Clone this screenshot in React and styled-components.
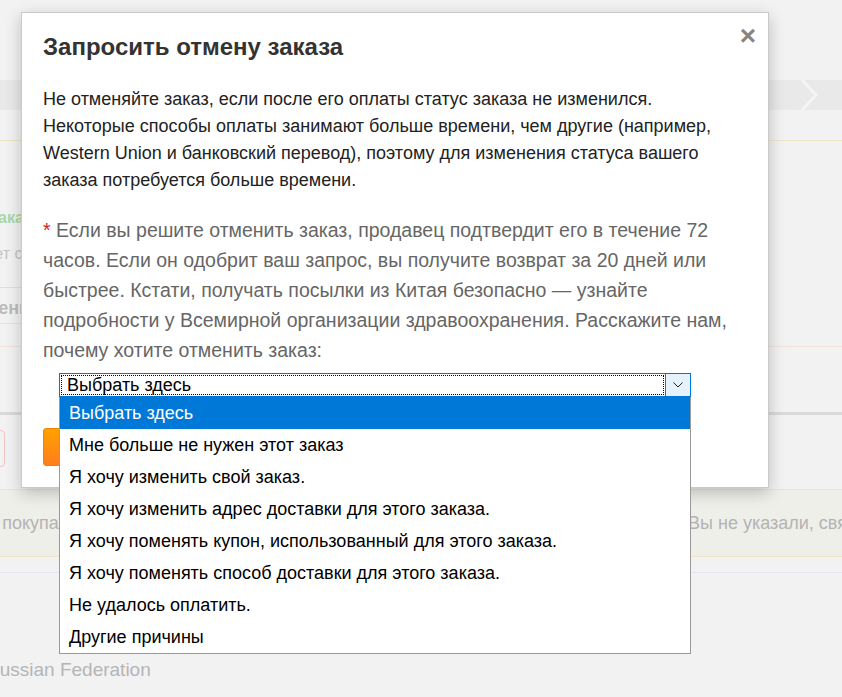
import React from 'react';
import { styled, createGlobalStyle } from 'styled-components';

const GlobalStyle = createGlobalStyle`
  html, body {
    margin: 0;
    padding: 0;
  }
  body {
    font-family: "Liberation Sans", Arial, sans-serif;
    background: #f2f2f2;
  }
`;

// faded order page behind the dialog
const Page = styled.div`
  position: relative;
  width: 842px;
  height: 697px;
  overflow: hidden;
  background: #f2f2f2;
  color: #b8b8b8;
`;

const StepBar = styled.div`
  margin-top: 80px;
  height: 30px;
  background: #e9e9e9;
  display: flex;
  justify-content: flex-end;
  padding-right: 20px;
`;

const Rule = styled.div`
  margin-top: ${p => p.$gap}px;
  height: ${p => p.$size || 1}px;
  width: ${p => p.$width || '100%'};
  background: ${p => p.$color};
`;

const Faded = styled.div`
  margin-top: ${p => p.$gap}px;
  margin-left: ${p => p.$shift}px;
  font-size: ${p => p.$size || 16}px;
  font-weight: ${p => (p.$bold ? 700 : 400)};
  line-height: 20px;
  color: ${p => p.$color || '#bdbdbd'};
  white-space: nowrap;
`;

const GhostButton = styled.div`
  margin-top: 15px;
  margin-left: -60px;
  width: 65px;
  height: 37px;
  box-sizing: border-box;
  border: 1px solid #f2c4c4;
  border-radius: 4px;
`;

const Notice = styled.div`
  margin-top: 22px;
  height: 68px;
  box-sizing: border-box;
  border-top: 1px solid #f1e4c6;
  border-bottom: 1px solid #f1e4c6;
  background: #efefea;
  display: grid;
  grid-template-columns: 688px 1fr;
  align-items: center;
  font-size: 18px;
  color: #b3b3b3;
  white-space: nowrap;
  overflow: hidden;
`;

const NoticeText = styled.span`
  margin-left: ${p => p.$shift || 0}px;
`;

// dialog
const Modal = styled.div`
  position: absolute;
  left: 21px;
  top: 12px;
  width: 748px;
  height: 476px;
  box-sizing: border-box;
  background: #fff;
  border: 1px solid #c9c9c9;
  box-shadow: 0 5px 15px rgba(0, 0, 0, 0.22);
  padding: 20px 22px 0 21px;
`;

const Close = styled.button`
  position: absolute;
  top: 9px;
  right: 12px;
  border: 0;
  background: none;
  padding: 0;
  font: 700 28px/1 "Liberation Sans", Arial, sans-serif;
  color: #858585;
  cursor: pointer;
`;

const Title = styled.h3`
  margin: 0;
  font-size: 24px;
  line-height: 28px;
  font-weight: 700;
  color: #333;
`;

const Lead = styled.p`
  margin: 25px 0 0;
  font-size: 18px;
  line-height: 27px;
  color: #222;
  white-space: nowrap;
`;

const Note = styled.p`
  margin: 21px 0 0;
  font-size: 19.5px;
  line-height: 30px;
  color: #666;
  white-space: nowrap;
`;

const Star = styled.span`
  color: #e02020;
`;

const SelectWrap = styled.div`
  position: relative;
  margin: 8px 0 0 16px;
  width: 632px;
`;

const SelectBox = styled.div`
  display: flex;
  height: 24px;
  box-sizing: border-box;
  border: 1px solid #0078d7;
  background: #fff;
`;

const SelectValue = styled.div`
  flex: 1;
  margin: 1px;
  padding-left: 5px;
  border: 1px dotted #000;
  font-size: 18px;
  line-height: 18px;
  color: #000;
`;

const SelectArrow = styled.div`
  width: 24px;
  background: #e5f1fb;
  border-left: 1px solid #0078d7;
  display: flex;
  align-items: center;
  justify-content: center;
`;

const OptionList = styled.ul`
  position: absolute;
  left: 0;
  top: 24px;
  width: 632px;
  box-sizing: border-box;
  margin: 0;
  padding: 0;
  list-style: none;
  background: #fff;
  border: 1px solid #9a9a9a;
  border-top: 0;
  z-index: 2;
`;

const Option = styled.li`
  height: 32px;
  line-height: 32px;
  padding-left: 9px;
  font-size: 18px;
  color: ${p => (p.$active ? '#fff' : '#000')};
  background: ${p => (p.$active ? '#0078d7' : '#fff')};
`;

const SubmitButton = styled.button`
  margin-top: 31px;
  height: 38px;
  padding: 0 28px;
  border: 1px solid #f08300;
  border-radius: 3px;
  background: linear-gradient(#ffa200, #ff7d1c);
  color: #fff;
  font: 700 16px "Liberation Sans", Arial, sans-serif;
`;

const reasons = [
  'Выбрать здесь',
  'Мне больше не нужен этот заказ',
  'Я хочу изменить свой заказ.',
  'Я хочу изменить адрес доставки для этого заказа.',
  'Я хочу поменять купон, использованный для этого заказа.',
  'Я хочу поменять способ доставки для этого заказа.',
  'Не удалось оплатить.',
  'Другие причины',
];

export default function App() {
  return (
    <>
      <GlobalStyle />
      <Page>
        <StepBar>
          <svg width="24" height="30" viewBox="0 0 24 30">
            <polyline points="4,0 18,15 4,30" fill="none" stroke="#f5f5f5" strokeWidth="3" />
          </svg>
        </StepBar>
        <Rule $gap={30} $color="#f1e4c6" />
        <Faded $gap={67} $shift={-12} $bold $color="#a9d7a9">Заказ</Faded>
        <Faded $gap={16} $shift={-56} $color="#c4c4c4">Ожидает согласования</Faded>
        <Rule $gap={23} $width="400px" $color="#dedede" />
        <Faded $gap={10} $shift={-38} $size={18} $bold $color="#bcbcbc">Отменить</Faded>
        <Rule $gap={5} $width="400px" $color="#e4e4e4" />
        <Rule $gap={22} $color="#f1e2dc" />
        <Rule $gap={65} $size={3} $color="#dadada" />
        <GhostButton />
        <Notice>
          <NoticeText $shift={-100}>Уважаемый покупатель</NoticeText>
          <NoticeText>Вы не указали, свяжитесь с продавцом</NoticeText>
        </Notice>
        <Rule $gap={15} $color="#e3e7f0" />
        <Faded $gap={87} $shift={-14} $size={19} $color="#b5b5b5">Russian Federation</Faded>

        <Modal>
          <Close aria-label="Закрыть">×</Close>
          <Title>Запросить отмену заказа</Title>
          <Lead>
            Не отменяйте заказ, если после его оплаты статус заказа не изменился.<br />
            Некоторые способы оплаты занимают больше времени, чем другие (например,<br />
            Western Union и банковский перевод), поэтому для изменения статуса вашего<br />
            заказа потребуется больше времени.
          </Lead>
          <Note>
            <Star>*</Star> Если вы решите отменить заказ, продавец подтвердит его в течение 72<br />
            часов. Если он одобрит ваш запрос, вы получите возврат за 20 дней или<br />
            быстрее. Кстати, получать посылки из Китая безопасно — узнайте<br />
            подробности у Всемирной организации здравоохранения. Расскажите нам,<br />
            почему хотите отменить заказ:
          </Note>
          <SelectWrap>
            <SelectBox>
              <SelectValue>Выбрать здесь</SelectValue>
              <SelectArrow>
                <svg width="10" height="6" viewBox="0 0 10 6">
                  <polyline points="0.5,0.5 5,5 9.5,0.5" fill="none" stroke="#222" strokeWidth="1" />
                </svg>
              </SelectArrow>
            </SelectBox>
            <OptionList>
              {reasons.map((r, i) => (
                <Option key={r} $active={i === 0}>{r}</Option>
              ))}
            </OptionList>
          </SelectWrap>
          <SubmitButton>Отправить</SubmitButton>
        </Modal>
      </Page>
    </>
  );
}
